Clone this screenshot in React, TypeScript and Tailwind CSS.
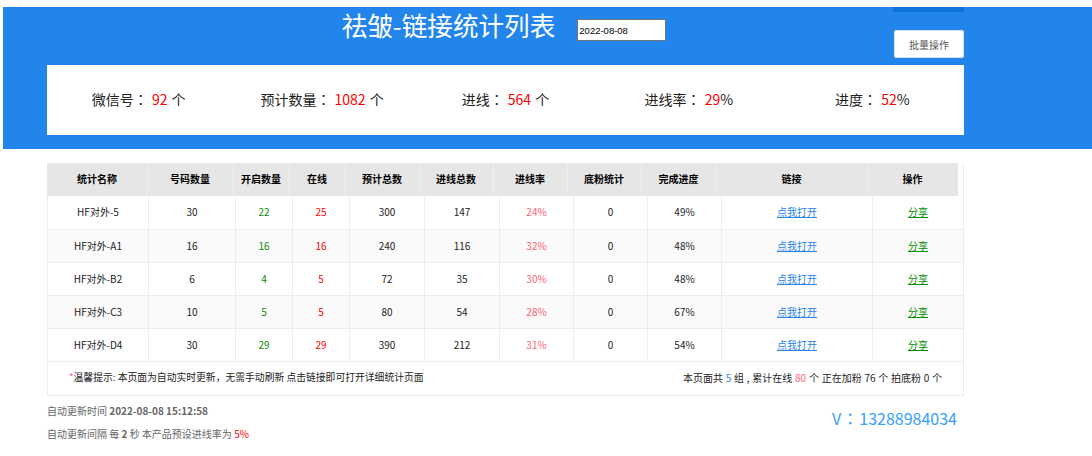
const headers = ['统计名称', '号码数量', '开启数量', '在线', '预计总数', '进线总数', '进线率', '底粉统计', '完成进度', '链接', '操作']

const rows = [
  ['HF对外-5', '30', '22', '25', '300', '147', '24%', '0', '49%'],
  ['HF对外-A1', '16', '16', '16', '240', '116', '32%', '0', '48%'],
  ['HF对外-B2', '6', '4', '5', '72', '35', '30%', '0', '48%'],
  ['HF对外-C3', '10', '5', '5', '80', '54', '28%', '0', '67%'],
  ['HF对外-D4', '30', '29', '29', '390', '212', '31%', '0', '54%'],
]

const stats = [
  { label: '微信号', value: '92', unit: ' 个' },
  { label: '预计数量', value: '1082', unit: ' 个' },
  { label: '进线', value: '564', unit: ' 个' },
  { label: '进线率', value: '29', unit: '%' },
  { label: '进度', value: '52', unit: '%' },
]

const cellColors = ['', '', 'text-[#0a8a0a]', 'text-[#ff0000]', '', '', 'text-[#ff5f6e]', '', '']

export default function App() {
  return (
    <div className="h-[456px] w-[1092px] overflow-hidden bg-white pl-[3px] pt-[7px] font-['Noto_Sans_CJK_SC','Noto_Sans',sans-serif] text-[10px] text-[#222]">
      {/* Header */}
      <div className="h-[142px] bg-[#2285ec] pl-[44px]">
        <div className="grid h-[58px] w-[917px] grid-cols-[1fr_auto_1fr]">
          <div />
          <div className="flex items-start pr-[3px]">
            <h1 className="text-[25.6px] leading-[36px] font-normal text-white">祛皱-链接统计列表</h1>
            <input
              readOnly
              value="2022-08-08"
              className="ml-[22px] mt-[12px] h-[22px] w-[89px] border border-[#767676] bg-white px-[1px] font-['Liberation_Sans',sans-serif] text-[9.5px] text-black outline-none"
            />
          </div>
          <div className="flex flex-col items-end">
            <div className="h-[5px] w-[71px] bg-[#1074dd]" />
            <button className="mt-[18px] h-[28px] w-[70px] rounded-[2px] border border-[#d5e6fb] bg-white text-[10px] text-[#555]">
              批量操作
            </button>
          </div>
        </div>
        <div className="grid h-[70px] w-[917px] grid-cols-5 items-center bg-white pb-[2px] text-center text-[14px] text-[#222] [word-spacing:1px]">
          {stats.map(s => (
            <div key={s.label}>
              {s.label}
              <span className="font-['Noto_Sans_CJK_TC',sans-serif]">：</span> <span className="text-[#ff0000]">{s.value}</span>
              {s.unit}
            </div>
          ))}
        </div>
      </div>

      {/* Table */}
      <div className="ml-[44px] mt-[14px] w-[917px] border-x border-b border-[#ebedf3]">
        <div className="-ml-px grid h-[33px] w-[911px] grid-cols-[100px_86px_56px_56px_74px_74px_74px_74px_75px_151px_91px] bg-[#e6e6e6] pb-[2px] font-bold text-black">
          {headers.map(h => (
            <div key={h} className="flex items-center justify-center shadow-[1px_0_0_#f0f0f0] last:shadow-none">
              {h}
            </div>
          ))}
        </div>
        {rows.map((row, i) => (
          <div
            key={row[0]}
            className={`grid grid-cols-[101px_87px_57px_57px_75px_75px_74px_74px_74px_151px_1fr] border-b border-[#ebedf3] ${i === 0 ? 'h-[34px]' : 'h-[33px]'} ${i % 2 === 1 ? 'bg-[#fafafa]' : 'bg-white'}`}
          >
            {row.map((cell, j) => (
              <div key={j} className={`flex items-center justify-center border-r border-[#ebedf3] pb-[2px] ${cellColors[j]}`}>
                {cell}
              </div>
            ))}
            <div className="flex items-center justify-center border-r border-[#ebedf3] pb-[2px]">
              <a className="text-[#2a84e8] underline">点我打开</a>
            </div>
            <div className="flex items-center justify-center pb-[2px]">
              <a className="text-[#008f00] underline">分享</a>
            </div>
          </div>
        ))}
        <div className="flex h-[33px] items-center justify-between pb-[3px] pl-[21px] pr-[21px] text-[#222]">
          <div className="text-[9.8px]">
            <span className="text-[#ff5f6e]">*</span>温馨提示: 本页面为自动实时更新，无需手动刷新 点击链接即可打开详细统计页面
          </div>
          <div className="[word-spacing:0.5px]">
            本页面共 <span className="text-[#2a84e8]">5</span> 组 , 累计在线 <span className="text-[#ff5f6e]">80</span> 个 正在加粉 76 个 拍底粉 0 个
          </div>
        </div>
      </div>

      {/* Footer */}
      <div className="ml-[44px] mt-[7px] flex w-[910px] justify-between">
        <div className="text-[#666]">
          <div className="leading-[16px]">
            自动更新时间 <b>2022-08-08 15:12:58</b>
          </div>
          <div className="mt-[7px] leading-[16px]">
            自动更新间隔 每 <b>2</b> 秒 本产品预设进线率为 <span className="text-[#ff0000]">5%</span>
          </div>
        </div>
        <div className="pt-[3px] text-[16px] leading-[24px] text-[#35a0ff]">
          V<span className="px-[1px] font-['Noto_Sans_CJK_TC',sans-serif]">：</span>13288984034
        </div>
      </div>
    </div>
  )
}
